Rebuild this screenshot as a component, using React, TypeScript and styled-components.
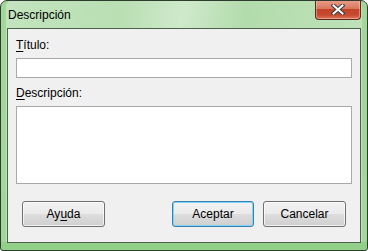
import React from "react";
import styled, { createGlobalStyle } from "styled-components";

const GlobalStyle = createGlobalStyle`
	html, body {
		margin: 0;
		padding: 0;
		background: #ffffff;
	}
	body {
		font-family: "Liberation Sans", Arial, sans-serif;
		font-size: 12px;
	}
`;

const StyledWindow = styled.div`
	box-sizing: border-box;
	width: 368px;
	height: 251px;
	display: flex;
	flex-direction: column;
	border: 1px solid #2e3b2e;
	border-radius: 7px 7px 3px 3px;
	overflow: hidden;
	background: linear-gradient(
		100deg,
		#c4e4bf 0%,
		#b9dfb3 30%,
		#cfe9cb 45%,
		#b3dcac 60%,
		#c2e3bd 100%
	);
	box-shadow: inset 0 -8px 0 #92cf89, inset 6px 0 0 -1px #a2d69a,
		inset -6px 0 0 -1px #a2d69a;
`;

const StyledTitleBar = styled.div`
	height: 27px;
	flex: none;
	display: flex;
	align-items: flex-start;
	justify-content: space-between;
`;

const StyledTitle = styled.span`
	padding: 7px 0 0 7px;
	line-height: 15px;
	color: #000000;
`;

const StyledClose = styled.button`
	box-sizing: border-box;
	width: 46px;
	height: 20px;
	margin: -1px 6px 0 0;
	padding: 0;
	display: flex;
	align-items: center;
	justify-content: center;
	border: 1px solid #5a2a1e;
	border-top: none;
	border-radius: 0 0 4px 4px;
	background: linear-gradient(
		#e8a08c 0%,
		#d9775f 45%,
		#c4432a 50%,
		#c94a30 80%,
		#dc7a5e 100%
	);
	box-shadow: inset 0 0 0 1px rgba(255, 210, 195, 0.45);
`;

const StyledClient = styled.div`
	flex: 1;
	margin: 0 6px 7px;
	padding: 9px 8px 0;
	display: flex;
	flex-direction: column;
	border: 1px solid #4a634a;
	background: #f0f0f0;
`;

const StyledLabel = styled.label<{ $gap?: number }>`
	display: block;
	line-height: 15px;
	color: #000000;
	margin-top: ${({ $gap }) => $gap ?? 0}px;
	margin-bottom: 5px;

	u {
		text-decoration-thickness: 1px;
		text-underline-offset: 2px;
	}
`;

const StyledInput = styled.input`
	box-sizing: border-box;
	width: 336px;
	height: 20px;
	margin: 0;
	border: 1px solid #a9a9a9;
	background: #ffffff;
	outline: none;
`;

const StyledTextArea = styled.textarea`
	box-sizing: border-box;
	width: 336px;
	height: 78px;
	margin: 0;
	border: 1px solid #a9a9a9;
	background: #ffffff;
	resize: none;
	outline: none;
`;

const StyledButtons = styled.div`
	display: flex;
	gap: 9px;
	margin-top: 17px;
	padding: 0 6px;
`;

const StyledButton = styled.button<{
	$default?: boolean;
	$push?: boolean;
	$width?: number;
}>`
	box-sizing: border-box;
	width: ${({ $width }) => $width ?? 83}px;
	height: 26px;
	margin: 0 0 0 ${({ $push }) => ($push ? "auto" : "0")};
	padding: 0;
	font-family: "Liberation Sans", Arial, sans-serif;
	font-size: 12px;
	color: #000000;
	border: 1px solid ${({ $default }) => ($default ? "#3c7fb1" : "#707070")};
	border-radius: 3px;
	background: linear-gradient(
		#f2f2f2 0%,
		#ebebeb 48%,
		#dddddd 52%,
		#cfcfcf 100%
	);
	box-shadow: inset 0 0 0 1px
		${({ $default }) => ($default ? "#7fd3f5" : "rgba(255,255,255,0.7)")};

	u {
		text-decoration-thickness: 1px;
		text-underline-offset: 2px;
	}
`;

const CloseGlyph = () => (
	<svg width="14" height="11" viewBox="0 0 14 11">
		<path
			d="M2.5 1.5 L11.5 9.5 M11.5 1.5 L2.5 9.5"
			stroke="#3b3b3b"
			strokeWidth="4"
			strokeLinecap="square"
		/>
		<path
			d="M2.5 1.5 L11.5 9.5 M11.5 1.5 L2.5 9.5"
			stroke="#ffffff"
			strokeWidth="2"
			strokeLinecap="square"
		/>
	</svg>
);

const App = () => {
	return (
		<>
			<GlobalStyle />
			<StyledWindow>
				<StyledTitleBar>
					<StyledTitle>Descripción</StyledTitle>
					<StyledClose aria-label="Cerrar">
						<CloseGlyph />
					</StyledClose>
				</StyledTitleBar>
				<StyledClient>
					<StyledLabel>
						<u>T</u>ítulo:
					</StyledLabel>
					<StyledInput />
					<StyledLabel $gap={8}>
						<u>D</u>escripción:
					</StyledLabel>
					<StyledTextArea />
					<StyledButtons>
						<StyledButton>
							Ay<u>u</u>da
						</StyledButton>
						<StyledButton $default $push $width={82}>
							Aceptar
						</StyledButton>
						<StyledButton>Cancelar</StyledButton>
					</StyledButtons>
				</StyledClient>
			</StyledWindow>
		</>
	);
};

export default App;
